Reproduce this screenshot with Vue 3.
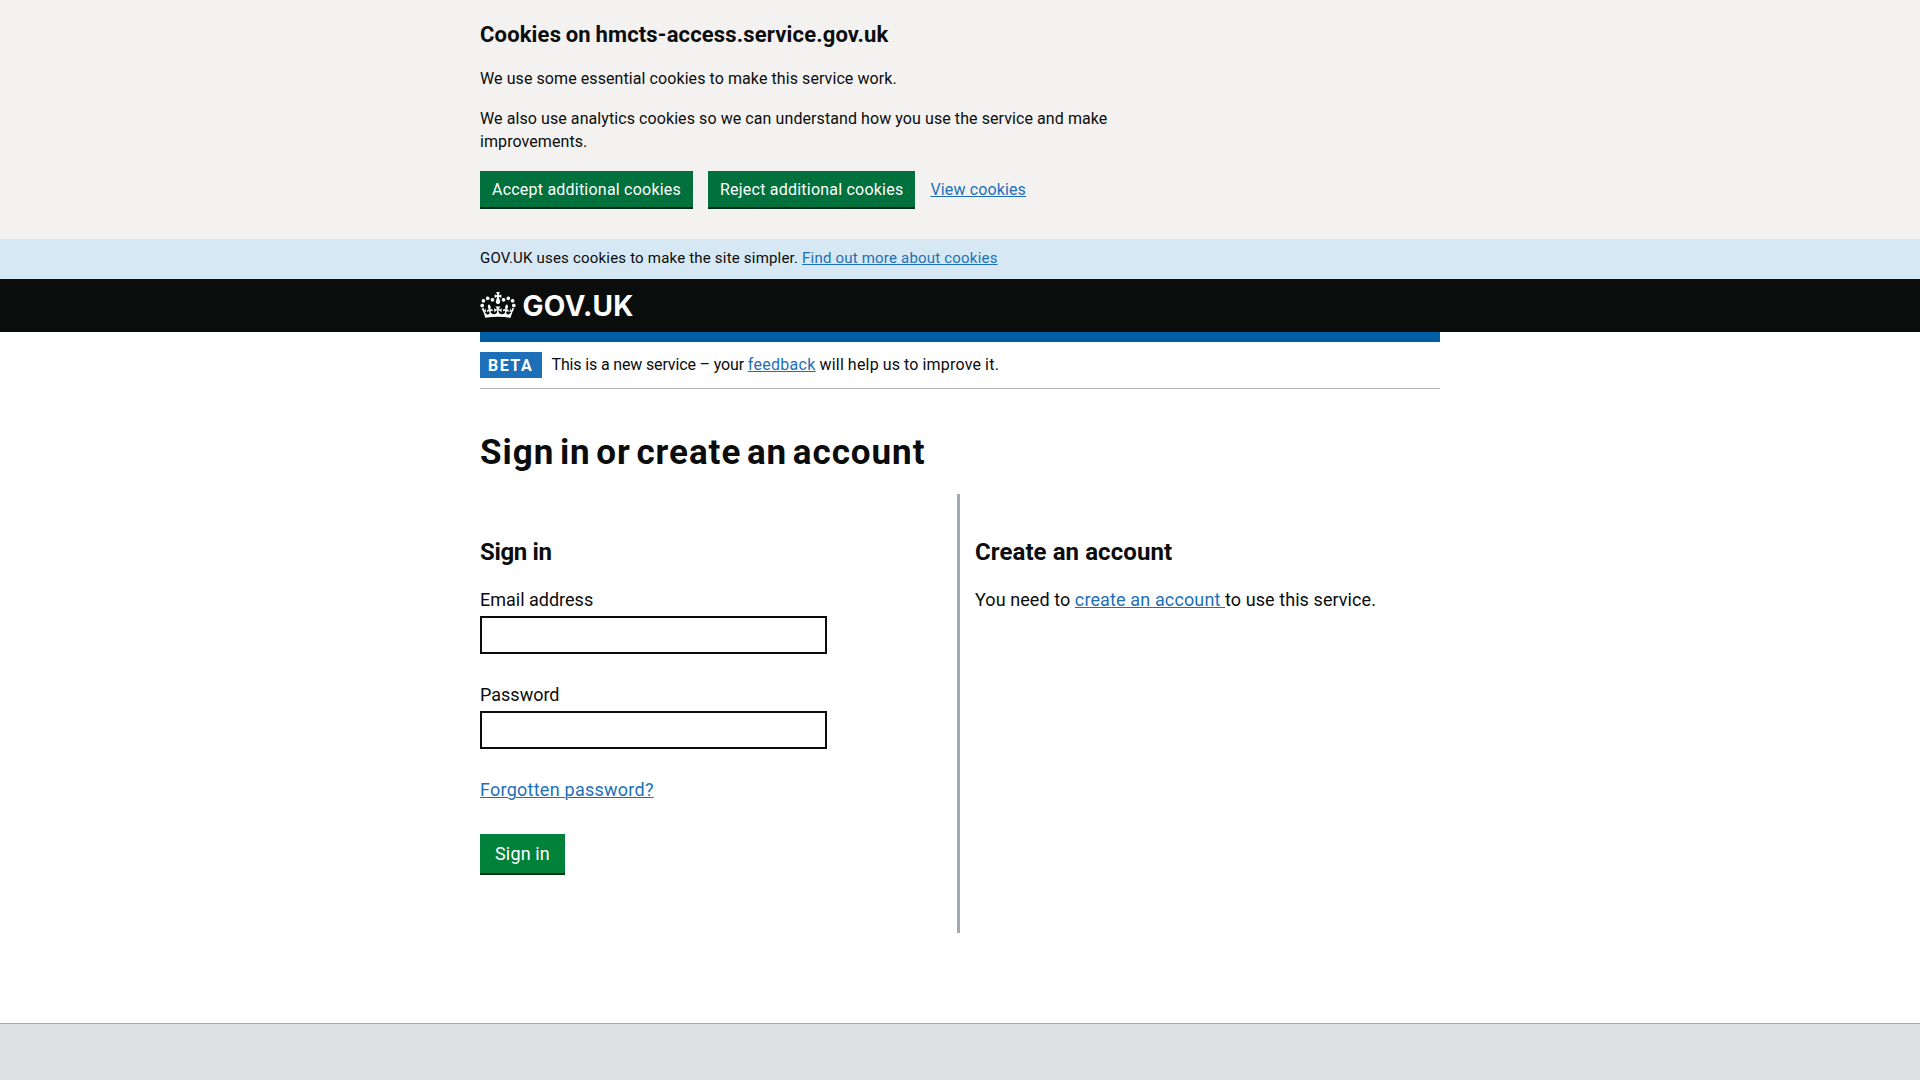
<script setup>
import { ref } from 'vue'

const email = ref('')
const password = ref('')
</script>

<template>
  <div class="page">
    <section class="cookie-banner" aria-label="Cookies on hmcts-access.service.gov.uk">
      <div class="container">
        <h2 class="cookie-title">Cookies on hmcts-access.service.gov.uk</h2>
        <div class="cookie-text">
          <p>We use some essential cookies to make this service work.</p>
          <p>We also use analytics cookies so we can understand how you use the service and make improvements.</p>
        </div>
        <div class="cookie-actions">
          <button type="button" class="cookie-button">Accept additional cookies</button>
          <button type="button" class="cookie-button">Reject additional cookies</button>
          <a href="#" class="link cookie-link">View cookies</a>
        </div>
      </div>
    </section>

    <div class="cookie-message">
      <p class="container">GOV.UK uses cookies to make the site simpler. <a href="#" class="link">Find out more about cookies</a></p>
    </div>

    <header class="header">
      <div class="container header-inner">
        <svg class="crown" viewBox="0 0 132 97" width="36" height="26" aria-hidden="true">
          <path fill="currentColor" fill-rule="evenodd" d="M25 30.2c3.5 1.5 7.7-.2 9.1-3.7 1.5-3.6-.2-7.8-3.9-9.2-3.6-1.4-7.6.3-9.1 3.9-1.4 3.5.3 7.5 3.9 9zM9 39.5c3.6 1.5 7.8-.2 9.2-3.7 1.5-3.6-.2-7.8-3.9-9.1-3.6-1.5-7.6.2-9.1 3.8-1.4 3.5.3 7.5 3.8 9zM4.4 57.2c3.5 1.5 7.7-.2 9.1-3.8 1.5-3.6-.2-7.7-3.9-9.1-3.5-1.5-7.6.3-9.1 3.8-1.4 3.5.3 7.6 3.9 9.1zm38.3-21.4c3.5 1.5 7.7-.2 9.1-3.8 1.5-3.6-.2-7.7-3.9-9.1-3.6-1.5-7.6.3-9.1 3.8-1.3 3.6.4 7.7 3.9 9.1zm64.4-5.6c-3.6 1.5-7.8-.2-9.1-3.7-1.5-3.6.2-7.8 3.8-9.2 3.6-1.4 7.7.3 9.2 3.9 1.3 3.5-.4 7.5-3.9 9zm15.9 9.3c-3.6 1.5-7.7-.2-9.1-3.7-1.5-3.6.2-7.8 3.7-9.1 3.6-1.5 7.7.2 9.2 3.8 1.5 3.5-.3 7.5-3.8 9zm4.7 17.7c-3.6 1.5-7.8-.2-9.2-3.8-1.5-3.6.2-7.7 3.9-9.1 3.6-1.5 7.7.3 9.2 3.8 1.3 3.5-.4 7.6-3.9 9.1zM89.3 35.8c-3.6 1.5-7.8-.2-9.2-3.8-1.4-3.6.2-7.7 3.9-9.1 3.6-1.5 7.7.3 9.2 3.8 1.4 3.6-.3 7.7-3.9 9.1zM69.7 17.7l8.9 4.7V9.3l-8.9 2.8c-.2-.3-.5-.6-.9-.9L72.4 0H59.6l3.5 11.2c-.3.3-.6.5-.9.9l-8.8-2.8v13.1l8.8-4.7c.3.3.6.7.9.9l-5 15.4v.1c-.2.8-.4 1.6-.4 2.4 0 4.1 3.1 7.5 7 8.1h.2c.3 0 .7.1 1 .1.4 0 .7 0 1-.1h.2c4-.6 7.1-4.1 7.1-8.1 0-.8-.1-1.7-.4-2.4V34l-5.1-15.4c.4-.2.7-.6 1-.9zM66 92.8c16.9 0 32.8 1.1 47.1 3.2 4-16.9 8.9-26.7 14-33.5l-9.6-3.4c1 4.9 1.1 7.2 0 10.2-1.5-1.4-3-4.3-4.2-8.7L108.6 76c2.8-2 5-3.2 7.5-3.3-4.4 9.4-10 11.9-13.6 11.2-4.3-.8-6.3-4.6-5.6-7.9 1-4.7 5.7-5.9 8-.5 4.3-8.7-3-11.4-7.6-8.8 7.1-7.2 7.9-13.5 2.1-21.1-8 6.1-8.1 12.3-4.5 20.8-4.7-5.4-12.1-2.5-9.5 6.2 3.4-5.2 7.9-2 7.2 3.1-.6 4.3-6.4 7.8-13.5 7.2-10.3-.9-10.9-8-11.2-13.8 2.5-.5 7.1 1.8 11 7.3L80.2 60c-4.1 4.4-8 5.3-12.3 5.4 1.4-4.4 8-11.6 8-11.6H55.5s6.4 7.2 7.9 11.6c-4.2-.1-8-1-12.3-5.4l1.4 16.4c3.9-5.5 8.5-7.7 10.9-7.3-.3 5.8-.9 12.8-11.1 13.8-7.2.6-12.9-2.9-13.5-7.2-.7-5 3.8-8.3 7.1-3.1 2.7-8.7-4.6-11.6-9.4-6.2 3.7-8.5 3.6-14.7-4.6-20.8-5.8 7.6-5 13.9 2.2 21.1-4.7-2.6-11.9.1-7.7 8.8 2.3-5.5 7.1-4.2 8.1.5.7 3.3-1.3 7.1-5.7 7.9-3.5.7-9-1.8-13.5-11.2 2.5.1 4.7 1.3 7.5 3.3l-4.7-15.4c-1.2 4.4-2.7 7.2-4.3 8.7-1.1-3-.9-5.3 0-10.2l-9.5 3.4c5 6.9 9.9 16.7 14 33.5 14.8-2.1 30.8-3.2 47.7-3.2z" />
        </svg>
        <span class="logotype">GOV.UK</span>
      </div>
    </header>

    <div class="container">
      <div class="header-bar"></div>
      <div class="phase-banner">
        <strong class="tag">BETA</strong>
        <p class="phase-text">
          <span class="phase-lead">This is a new service – your </span><a href="#" class="link feedback">feedback</a><span class="phase-tail"> will help us to improve it.</span>
        </p>
      </div>

      <main>
        <h1>Sign in or create an account</h1>
        <div class="columns">
          <form class="sign-in" @submit.prevent>
            <h2 class="tight">Sign in</h2>
            <label for="username">Email address</label>
            <input id="username" v-model="email" type="text" />
            <label for="password" class="next">Password</label>
            <input id="password" v-model="password" type="password" />
            <a href="#" class="link forgotten">Forgotten password?</a>
            <button type="submit" class="submit">Sign in</button>
          </form>
          <section class="create">
            <h2>Create an account</h2>
            <p>You need to <a href="#" class="link create-link">create an account </a>to use this service.</p>
          </section>
        </div>
      </main>
    </div>

    <footer class="footer"></footer>
  </div>
</template>

<style>
html,
body {
  margin: 0;
  background: #dee0e2;
}
</style>

<style scoped>
.page {
  display: flex;
  flex-direction: column;
  height: 1080px;
  overflow: hidden;
  background: #fff;
  color: #0b0c0c;
  font-family: Roboto, "Liberation Sans", sans-serif;
  font-size: 16px;
}

h1,
h2,
p {
  margin: 0;
}

button,
input {
  font-family: inherit;
  border-radius: 0;
}

.container {
  width: 960px;
  margin: 0 auto;
}

.link {
  color: #1d70b8;
  text-decoration: underline;
  text-decoration-thickness: 1px;
  text-underline-offset: 1px;
}

.cookie-banner {
  box-sizing: border-box;
  flex: none;
  height: 239px;
  padding-top: 20px;
  background: #f3f2f1;
}

.cookie-text {
  width: 640px;
  line-height: 23px;
  letter-spacing: 0.08px;
}

.cookie-text p {
  margin-top: 17px;
}

.cookie-actions {
  display: flex;
  margin-top: 18px;
}

.cookie-button {
  height: 38px;
  margin: 0 15px 0 0;
  padding: 1px 12px 0;
  border: 0;
  border-bottom: 2px solid #002d18;
  background: #00703c;
  color: #fff;
  font-size: 16px;
  line-height: 36px;
  letter-spacing: 0.22px;
}

.cookie-link {
  padding-top: 1px;
  line-height: 36px;
  letter-spacing: 0.14px;
}

.cookie-message {
  flex: none;
  height: 40px;
  background: #d5e8f3;
  font-size: 15px;
  line-height: 38px;
  letter-spacing: 0.2px;
}

.header {
  flex: none;
  height: 53px;
  background: #0b0c0c;
  color: #fff;
}

.header-inner {
  display: flex;
  align-items: center;
  height: 53px;
}

.crown {
  margin: 0 6.5px 2px 0;
}

.logotype {
  padding-top: 2px;
  font-family: Inter, sans-serif;
  font-size: 28px;
  font-weight: 700;
  line-height: 51px;
  letter-spacing: 0.25px;
}

.header-bar {
  height: 10px;
  background: #005ea5;
}

.phase-banner {
  display: flex;
  gap: 9.5px;
  padding: 10px 0;
  border-bottom: 1px solid #b1b4b6;
}

.tag {
  box-sizing: border-box;
  width: 62px;
  height: 26px;
  padding-left: 8px;
  background: #1d70b8;
  color: #fff;
  line-height: 27px;
  letter-spacing: 1.5px;
}

.phase-text {
  line-height: 26px;
  height: 26px;
  white-space: nowrap;
}

.phase-lead {
  letter-spacing: -0.15px;
}

.feedback {
  letter-spacing: 0.3px;
}

.phase-tail {
  letter-spacing: 0.22px;
  word-spacing: -0.4px;
}

h1 {
  margin-top: 39px;
  font-size: 35px;
  line-height: 50px;
  letter-spacing: 0.95px;
  word-spacing: -4px;
}

.columns {
  display: flex;
  height: 439px;
  margin: 16px 0 90px;
}

.sign-in,
.create {
  box-sizing: border-box;
  padding-top: 43px;
  font-size: 18px;
  line-height: 25px;
}

.sign-in {
  display: flex;
  flex-direction: column;
  align-items: flex-start;
  width: 477px;
}

.create {
  flex: 1;
  padding-left: 15px;
  border-left: 3px solid #a1acb2;
}

.create p {
  letter-spacing: 0.07px;
}

h2 {
  margin-bottom: 20px;
  font-size: 24px;
  line-height: 30px;
  letter-spacing: 0.08px;
}

.cookie-title {
  margin-bottom: 0;
  font-size: 22px;
  letter-spacing: 0.16px;
  word-spacing: -1px;
}

.tight {
  letter-spacing: -0.35px;
}

.next {
  margin-top: 28px;
}

input {
  box-sizing: border-box;
  width: 347px;
  height: 38px;
  margin: 4px 0 0;
  padding: 5px;
  border: 2px solid #0b0c0c;
  background: #fff;
  font-size: 18px;
}

.forgotten {
  margin-top: 28px;
  letter-spacing: 0.25px;
}

.submit {
  width: 85px;
  height: 41px;
  margin: 32px 0 0;
  padding: 0;
  border: 0;
  border-bottom: 2px solid #003618;
  background: #00823b;
  color: #fff;
  font-size: 18px;
  line-height: 39px;
  letter-spacing: 0.15px;
}

.create .create-link {
  letter-spacing: 0.13px;
}

.footer {
  flex: 1;
  border-top: 1px solid #a1acb2;
  background: #dee0e2;
}
</style>
